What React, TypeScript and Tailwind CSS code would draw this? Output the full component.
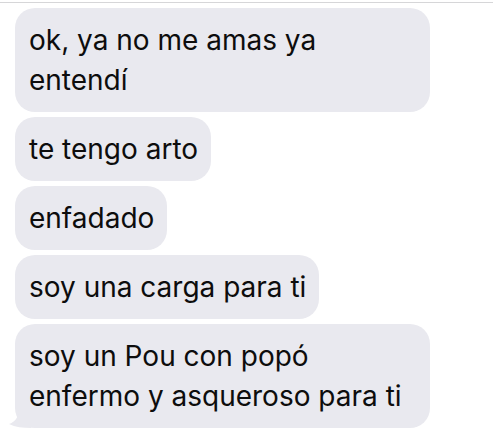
import React from "react";

const messages: string[][] = [
  ["ok, ya no me amas ya", "entendí"],
  ["te tengo arto"],
  ["enfadado"],
  ["soy una carga para ti"],
  ["soy un Pou con popó", "enfermo y asqueroso para ti"],
];

function Bubble({ lines, last }: { lines: string[]; last: boolean }) {
  const wide = lines.length > 1;
  return (
    <div
      className={`relative rounded-[20px] bg-[#e9e9ef] pl-[14px] pr-[13px] pt-[12px] pb-[12px] text-[28px] leading-[40px] text-[#0d0d0d] ${
        wide ? "w-[415px]" : "w-fit"
      }`}
    >
      {lines.map((l) => (
        <div key={l} className="whitespace-nowrap">
          {l}
        </div>
      ))}
      {last && (
        <svg
          className="absolute -left-[6px] bottom-0"
          width="22"
          height="18"
          viewBox="0 0 22 18"
        >
          <path d="M22 0 L22 18 C14 18 6 17 0 14 C6 12 9 8 10 0 Z" fill="#e9e9ef" />
        </svg>
      )}
    </div>
  );
}

export default function App() {
  return (
    <div
      className="w-[493px] h-[434px] overflow-hidden bg-white"
      style={{ fontFamily: "Inter, 'Liberation Sans', sans-serif" }}
    >
      <div className="mt-[2px] h-px bg-[#d6d6d8]" />
      <div className="flex flex-col gap-[5px] pl-[15px] pt-[5px]">
        {messages.map((m, i) => (
          <Bubble key={i} lines={m} last={i === messages.length - 1} />
        ))}
      </div>
    </div>
  );
}
